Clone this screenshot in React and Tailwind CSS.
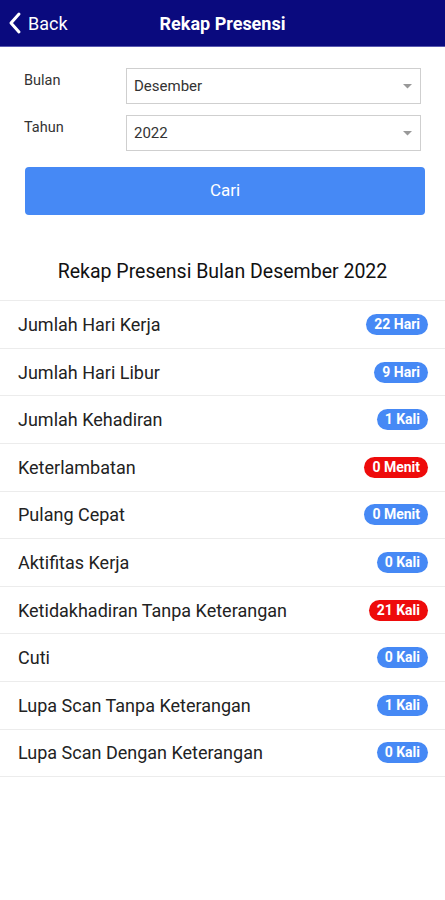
import React from 'react';

const rows = [
  { label: 'Jumlah Hari Kerja', value: '22 Hari', red: false },
  { label: 'Jumlah Hari Libur', value: '9 Hari', red: false },
  { label: 'Jumlah Kehadiran', value: '1 Kali', red: false },
  { label: 'Keterlambatan', value: '0 Menit', red: true },
  { label: 'Pulang Cepat', value: '0 Menit', red: false },
  { label: 'Aktifitas Kerja', value: '0 Kali', red: false },
  { label: 'Ketidakhadiran Tanpa Keterangan', value: '21 Kali', red: true },
  { label: 'Cuti', value: '0 Kali', red: false },
  { label: 'Lupa Scan Tanpa Keterangan', value: '1 Kali', red: false },
  { label: 'Lupa Scan Dengan Keterangan', value: '0 Kali', red: false },
];

function SelectBox({ value }) {
  return (
    <div className="flex-1 h-[36px] border border-[#cfcfcf] flex items-center justify-between pl-[7px] pr-[8px]">
      <span className="text-[15px] text-[#333]">{value}</span>
      <svg width="9" height="5" viewBox="0 0 9 5">
        <path d="M0 0 L9 0 L4.5 4.5 Z" fill="#999" />
      </svg>
    </div>
  );
}

export default function App() {
  return (
    <div className="w-[445px] min-h-[900px] bg-white" style={{ fontFamily: 'Roboto, "Noto Sans", sans-serif' }}>
      {/* Header */}
      <div className="h-[47px] bg-[#0a0a7e] flex items-center relative border-b border-[#5a5ab0]">
        <div className="flex items-center pl-[8px] gap-[6px]">
          <svg width="14" height="24" viewBox="0 0 14 24">
            <path d="M11 3 L3 12 L11 21" stroke="white" strokeWidth="3" fill="none" strokeLinecap="round" strokeLinejoin="round" />
          </svg>
          <span className="text-white text-[18px]">Back</span>
        </div>
        <div className="absolute left-0 right-0 text-center text-white font-bold text-[18px] pointer-events-none">
          Rekap Presensi
        </div>
      </div>

      {/* Form */}
      <div className="px-[24px] pt-[21px]">
        <div className="flex items-start">
          <span className="w-[102px] text-[14.5px] text-[#333] pt-[2px]">Bulan</span>
          <SelectBox value="Desember" />
        </div>
        <div className="flex items-start mt-[11px]">
          <span className="w-[102px] text-[14.5px] text-[#333] pt-[2px]">Tahun</span>
          <SelectBox value="2022" />
        </div>
        <button className="mt-[16px] ml-[1px] w-[400px] h-[48px] bg-[#4689f5] rounded-[4px] text-white text-[17px]">
          Cari
        </button>
      </div>

      {/* Summary */}
      <div className="text-center text-[19.5px] text-[#111] mt-[42px] mb-[14px]">
        Rekap Presensi Bulan Desember 2022
      </div>
      <div className="border-t border-[#ececec]">
        {rows.map((r) => (
          <div key={r.label} className="h-[47.6px] border-b border-[#ececec] flex items-center justify-between pl-[18px] pr-[17px]">
            <span className="text-[18px] text-[#222]">{r.label}</span>
            <span className={`h-[21px] px-[8px] rounded-full flex items-center text-white text-[14px] font-bold ${r.red ? 'bg-[#ee0b0b]' : 'bg-[#4689f5]'}`}>
              {r.value}
            </span>
          </div>
        ))}
      </div>
    </div>
  );
}
